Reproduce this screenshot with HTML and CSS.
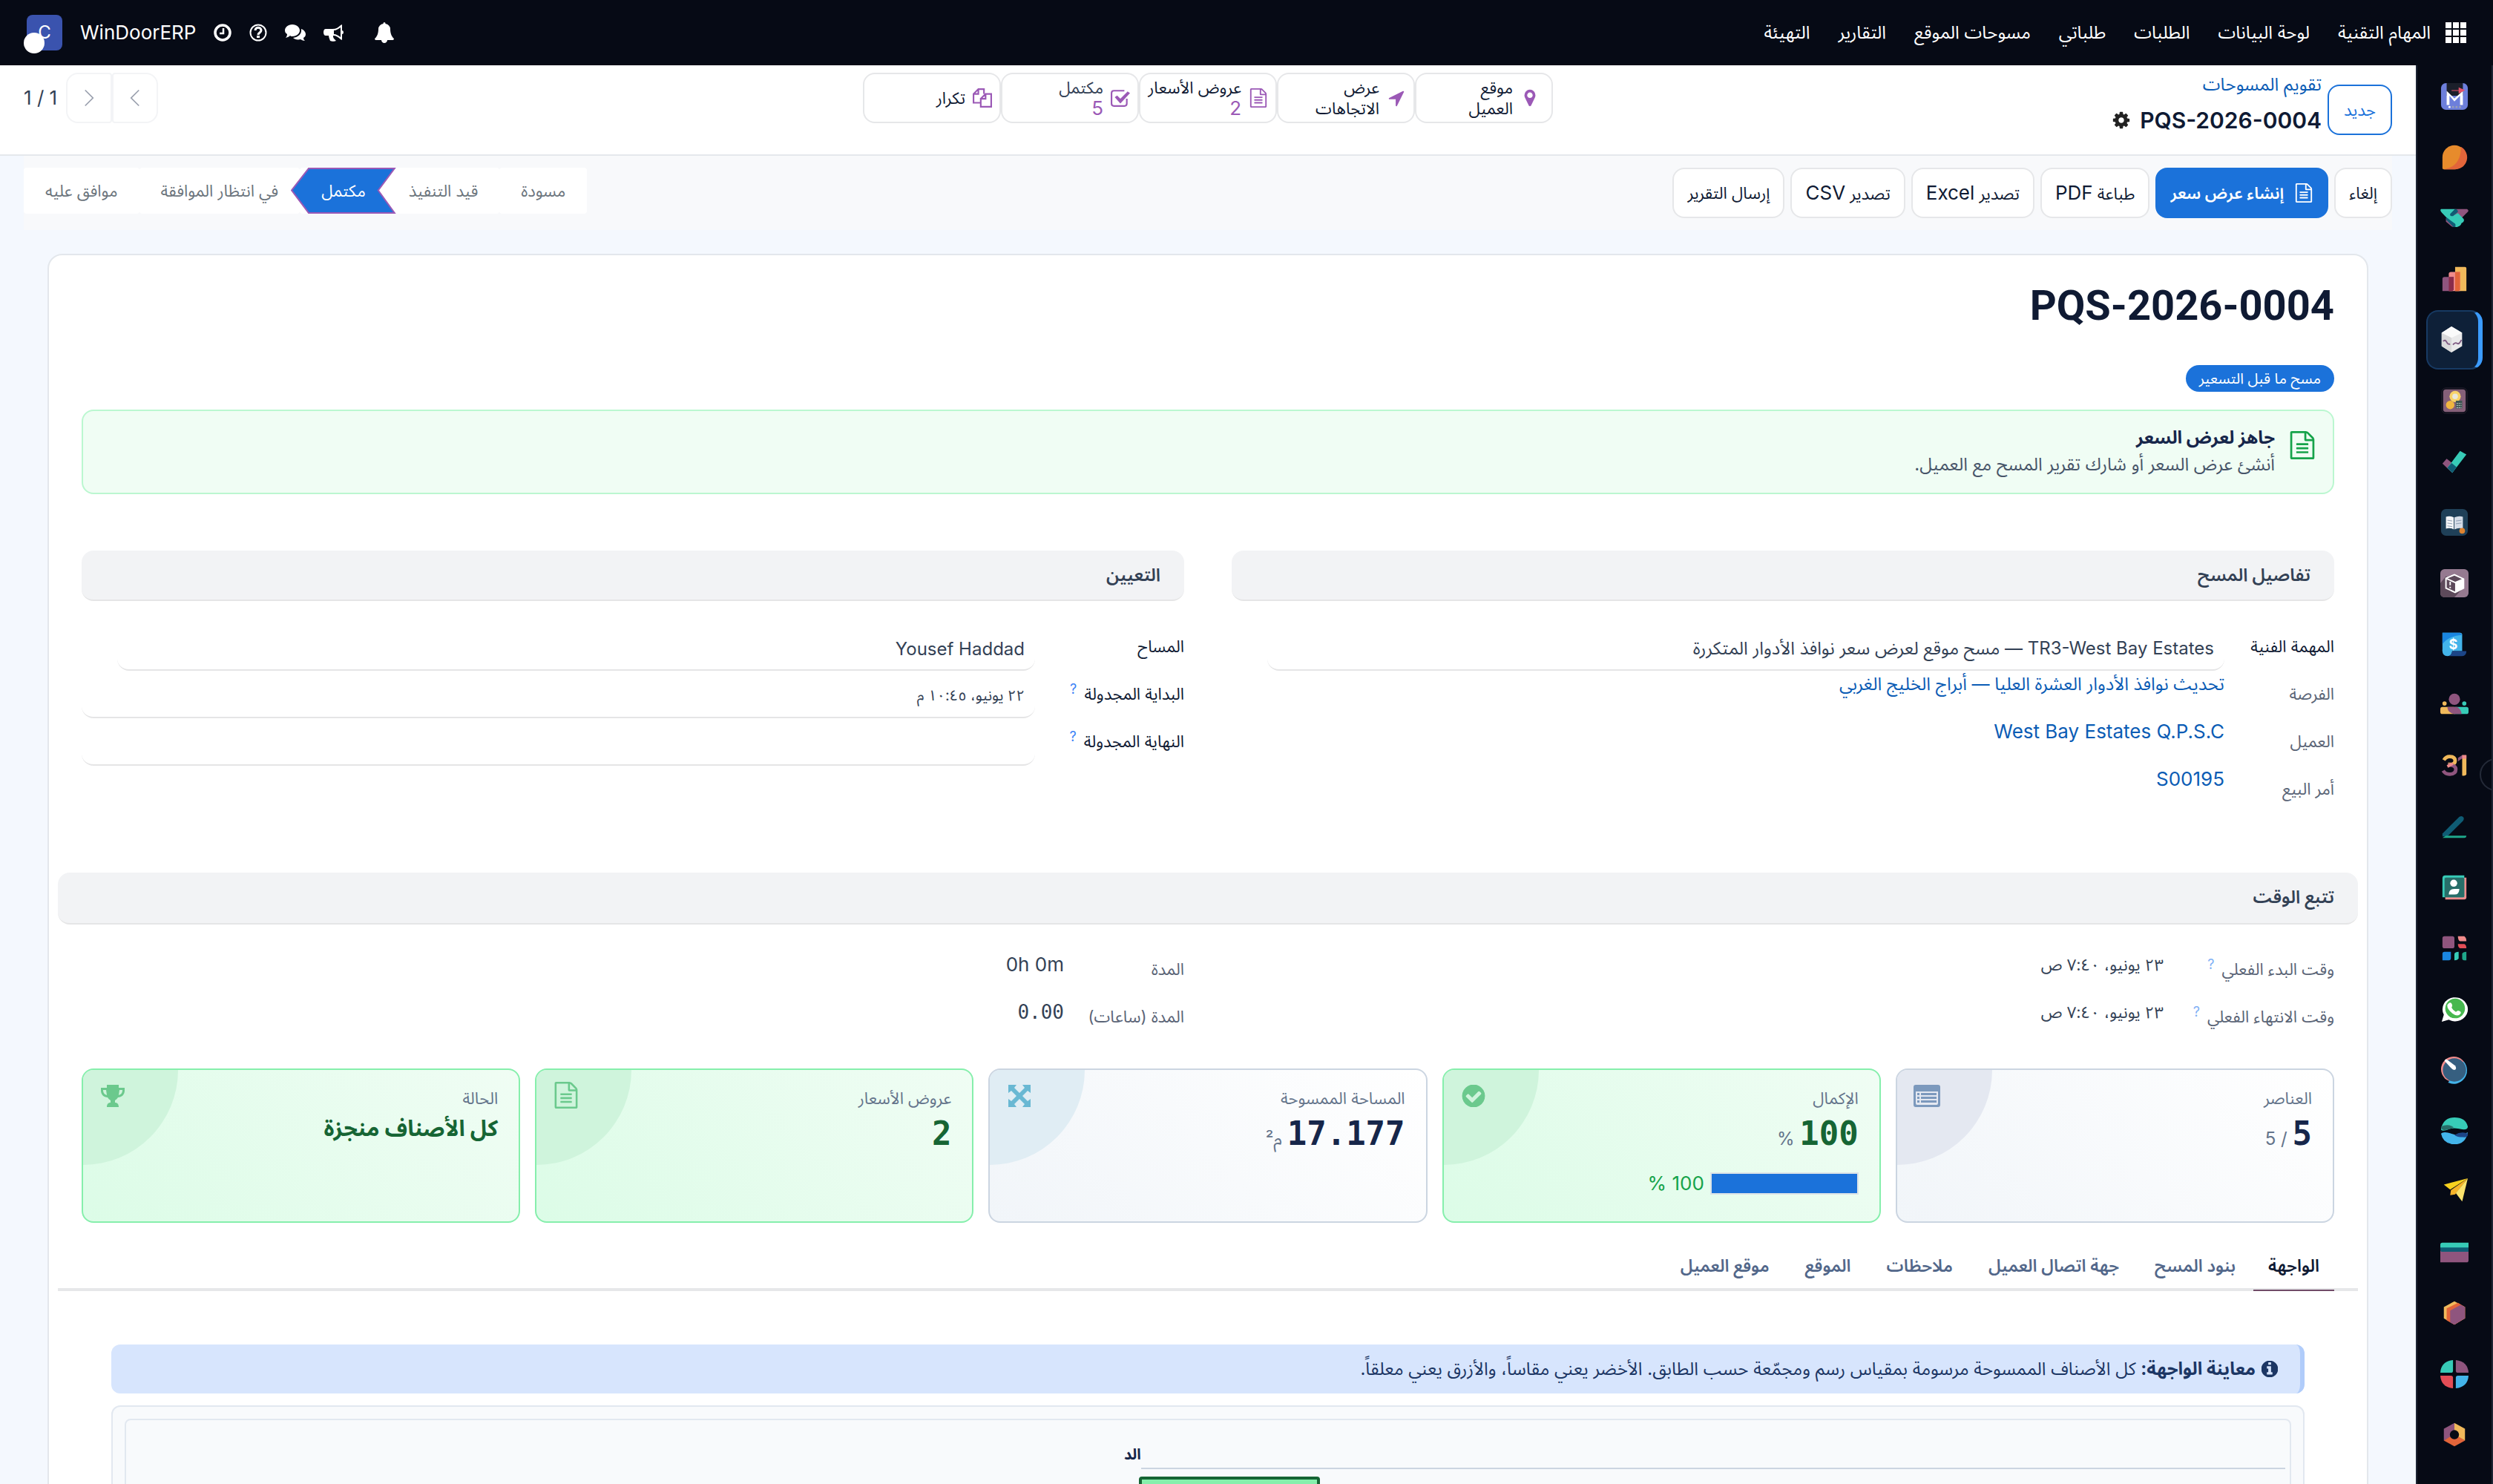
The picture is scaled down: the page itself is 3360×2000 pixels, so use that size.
FILE: index.html
```html
<!DOCTYPE html>
<html lang="ar" dir="rtl">
<head>
  <meta charset="UTF-8" />
  <meta name="viewport" content="width=device-width, initial-scale=1.0"/>
  <title>PQS-2026-0004 | WinDoorERP</title>
  <link rel="stylesheet" href="styles.css">
</head>
<body>

  <!-- shared icons -->
  <svg class="sprite" aria-hidden="true">
    <symbol id="i-file" viewBox="0 0 1792 1792"><path d="M1596 380q28 28 48 76t20 88v1152q0 40-28 68t-68 28h-1344q-40 0-68-28t-28-68v-1600q0-40 28-68t68-28h896q40 0 88 20t76 48zm-444-244v376h376q-10-29-22-41l-313-313q-12-12-41-22zm384 1528v-1024h-416q-40 0-68-28t-28-68v-416h-768v1536h1280zm-1024-864q0-14 9-23t23-9h704q14 0 23 9t9 23v64q0 14-9 23t-23 9h-704q-14 0-23-9t-9-23v-64zm736 224q14 0 23 9t9 23v64q0 14-9 23t-23 9h-704q-14 0-23-9t-9-23v-64q0-14 9-23t23-9h704zm0 256q14 0 23 9t9 23v64q0 14-9 23t-23 9h-704q-14 0-23-9t-9-23v-64q0-14 9-23t23-9h704z"/></symbol>
    <symbol id="i-bell" viewBox="0 0 1792 1792"><path d="M1728 1408q0 52-38 90t-90 38h-448q0 106-75 181t-181 75-181-75-75-181h-448q-52 0-90-38t-38-90q50-42 91-88t85-119.500 74.500-158.500 50-206 19.500-260q0-152 117-282.500t307-158.500q-8-19-8-39 0-40 28-68t68-28 68 28 28 68q0 20-8 39 190 28 307 158.500t117 282.500q0 139 19.500 260t50 206 74.500 158.500 85 119.500 91 88z"/></symbol>
    <symbol id="i-cog" viewBox="0 0 1792 1792"><path d="M1152 896q0-106-75-181t-181-75-181 75-75 181 75 181 181 75 181-75 75-181zm512-109v222q0 12-8 23t-20 13l-185 28q-19 54-39 91 35 50 107 138 10 12 10 25t-9 23q-27 37-99 108t-94 71q-12 0-26-9l-138-108q-44 23-91 38-16 136-29 186-7 28-36 28h-222q-14 0-24.500-8.500t-11.500-21.500l-28-184q-49-16-90-37l-141 107q-10 9-25 9-14 0-25-11-126-114-165-168-7-10-7-23 0-12 8-23 15-21 51-66.500t54-70.500q-27-50-41-99l-183-27q-13-2-21-12.500t-8-23.500v-222q0-12 8-23t19-13l186-28q14-46 39-92-40-57-107-138-10-12-10-24 0-10 9-23 26-36 98.500-107.500t94.500-71.500q13 0 26 10l138 107q44-23 91-38 16-136 29-186 7-28 36-28h222q14 0 24.500 8.500t11.500 21.500l28 184q49 16 90 37l142-107q9-9 24-9 13 0 25 10 129 119 165 170 7 8 7 22 0 12-8 23-15 21-51 66.500t-54 70.500q26 50 41 98l183 28q13 2 21 12.500t8 23.500z"/></symbol>
    <symbol id="i-pin" viewBox="0 0 1792 1792"><path d="M1152 640q0-106-75-181t-181-75-181 75-75 181 75 181 181 75 181-75 75-181zm256 0q0 109-33 179l-364 774q-16 33-47.500 52t-67.500 19-67.500-19-46.500-52l-365-774q-33-70-33-179 0-212 150-362t362-150 362 150 150 362z"/></symbol>
    <symbol id="i-arrow" viewBox="0 0 1792 1792"><path d="M1593 349l-640 1280q-17 35-57 35-5 0-15-2-22-5-35.500-22.500t-13.500-39.500v-576h-576q-22 0-39.500-13.500t-22.500-35.500 4-42 29-30l1280-640q13-7 29-7 27 0 45 19 15 14 18.500 34.500t-6.500 39.500z"/></symbol>
    <symbol id="i-check-circle" viewBox="0 0 1792 1792"><path d="M1412 734q0-28-18-46l-91-90q-19-19-45-19t-45 19l-408 407-226-226q-19-19-45-19t-45 19l-91 90q-18 18-18 46 0 27 18 45l362 362q19 19 45 19 27 0 46-19l543-543q18-18 18-45zm252 162q0 209-103 385.500t-279.500 279.500-385.500 103-385.500-103-279.500-279.500-103-385.500 103-385.500 279.500-279.500 385.500-103 385.500 103 279.500 279.500 103 385.500z"/></symbol>
    <symbol id="i-info" viewBox="0 0 1792 1792"><path d="M1152 1376v-160q0-14-9-23t-23-9h-96v-512q0-14-9-23t-23-9h-320q-14 0-23 9t-9 23v160q0 14 9 23t23 9h96v320h-96q-14 0-23 9t-9 23v160q0 14 9 23t23 9h448q14 0 23-9t9-23zm-128-896v-160q0-14-9-23t-23-9h-192q-14 0-23 9t-9 23v160q0 14 9 23t23 9h192q14 0 23-9t9-23zm640 416q0 209-103 385.500t-279.500 279.500-385.500 103-385.500-103-279.500-279.500-103-385.500 103-385.500 279.500-279.500 385.500-103 385.500 103 279.500 279.500 103 385.500z"/></symbol>
  </svg>

  <header class="navbar">
    <button class="apps-btn" aria-label="التطبيقات">
      <svg viewBox="0 0 28 28"><path d="M0 0h8v8H0zM10 0h8v8h-8zM20 0h8v8h-8zM0 10h8v8H0zM10 10h8v8h-8zM20 10h8v8h-8zM0 20h8v8H0zM10 20h8v8h-8zM20 20h8v8h-8z"/></svg>
    </button>
    <nav class="menu">
      <a class="brand" href="#">المهام التقنية</a>
      <a href="#">لوحة البيانات</a>
      <a href="#">الطلبات</a>
      <a href="#">طلباتي</a>
      <a href="#">مسوحات الموقع</a>
      <a href="#">التقارير</a>
      <a href="#">التهيئة</a>
    </nav>
    <div class="systray">
      <button aria-label="الإشعارات"><svg viewBox="0 0 24 24"><use href="#i-bell"/></svg></button>
      <button aria-label="الإعلانات"><svg class="wide" viewBox="0 0 28 24"><path d="M3 7h9c5 0 8-2 11-5l2-1v8q2 0 2 2.500T25 14v8l-2-1c-3-3-6-5-10-5 0 2 0 3 2 5l2 2c-2 1-6 1-8 0-1-3-2-5-2-7H3C1 16 0 14 0 11.500S1 7 3 7zm11 2v5c3 0 6 2 9 4V5c-3 2-6 4-9 4z" fill-rule="evenodd"/></svg></button>
      <button aria-label="الرسائل"><svg class="wide" viewBox="0 0 28 24"><path d="M10 1c6 0 10 4 10 8s-4 8-10 8c-1 0-2 0-3-1-2 2-4 2-6 3 1-1 2-3 2-5-2-1-3-3-3-5 0-4 4-8 10-8z"/><path d="M22 7c3 1 6 4 6 7 0 2-1 4-3 5 0 2 1 3 2 4-2 0-4-1-6-2-4 1-8 0-10-2 7-1 12-5 11-12z"/></svg></button>
      <button aria-label="المساعدة"><svg viewBox="0 0 24 24"><circle cx="12" cy="12" r="10.500" fill="none" stroke="currentColor" stroke-width="2"/><path d="M8 9c0-5 8-5 8 0 0 3-4 3-4 6" fill="none" stroke="currentColor" stroke-width="3"/><path d="M10 16h4v3h-4z"/></svg></button>
      <button aria-label="الأنشطة"><svg viewBox="0 0 24 24"><circle cx="12" cy="12" r="10" fill="none" stroke="currentColor" stroke-width="3.500"/><path d="M13 6v7H8" fill="none" stroke="currentColor" stroke-width="2.500"/></svg></button>
      <span class="company">WinDoorERP</span>
      <button class="avatar" aria-label="الحساب">C<span class="presence"></span></button>
    </div>
  </header>

  <div class="app">
    <aside class="sidebar">
      <a href="#" aria-label="M"><svg viewBox="0 0 40 40"><rect x="1" y="1" width="38" height="38" rx="7" fill="#6d7fdb"/><path d="M9 1h23v18H9z" fill="#1b1f2a"/><path d="M9 32V12l11 11 12-11v20h-4V19l-8 8-7-8v13z" fill="#fff"/><path d="M16 11h10V7l9 4-9 5v-4H16z" fill="#e4526a"/><circle cx="13" cy="35" r="1.500" fill="#fff"/><circle cx="18" cy="35" r="1.500" fill="#9aa0b5"/><circle cx="23" cy="35" r="1.500" fill="#9aa0b5"/><circle cx="28" cy="35" r="1.500" fill="#9aa0b5"/></svg></a>
      <a href="#" aria-label="المناقشات"><svg viewBox="0 0 40 40"><path d="M3 20a17 17 0 1 1 17 17H5q-2 0-2-2z" fill="#e78b2c"/><path d="M29 5a17 17 0 0 1-9 32H5C20 35 30 24 29 5z" fill="#e2653a"/></svg></a>
      <a href="#" aria-label="إدارة علاقات العملاء"><svg viewBox="0 0 40 40"><path d="M21 7h17q3 2 1 4L26 24 16 14z" fill="#8f557e"/><path d="M8 20l14 9q-4 6-8 1l-6-5z" fill="#8f557e"/><path d="M1 7h20l-6 7q2 3 6 1l4-2 8 8q2 4-3 6-1 4-5 5-4 2-6-2L2 12Q-1 9 1 7z" fill="#37cbb7"/><path d="M21 7q4 0 4 4l-7 6q-5 1-4-3zM9 19l12 9q2 4-2 5L8 22z" fill="#0f5c74"/></svg></a>
      <a href="#" aria-label="لوحات المعلومات"><svg viewBox="0 0 40 40"><path d="M21 3h14q2 0 2 2v32H21z" fill="#f0b95b"/><path d="M12 13q0-3 3-3h13v27H12z" fill="#f08b8b"/><path d="M21 10h7v25l-2 2h-5z" fill="#e2653a"/><path d="M3 20q0-3 3-3h13v18l-2 2H3z" fill="#8f557e"/><path d="M12 17h7v18l-2 2h-5z" fill="#8a2c4b"/></svg></a>
      <a href="#" class="active" aria-label="المهام التقنية"><svg viewBox="0 0 40 40"><path d="M18 1l15 9v19L18 38 4 29V10z" fill="#e9e9ea"/><path d="M4 10l14 7v21L4 29z" fill="#d9d9da"/><path d="M18 1l15 9-15 7-14-7z" fill="#fafafa"/><path d="M6 22q3-3 5 1t5 3M20 27q3-4 6-2t6-5" fill="none" stroke="#7f5a83" stroke-width="2"/></svg></a>
      <a href="#" aria-label="التسعير"><svg viewBox="0 0 40 40"><rect x="2" y="2" width="36" height="36" rx="6" fill="none" stroke="#2b2433"/><rect x="4" y="4" width="32" height="32" rx="4" fill="#856079"/><circle cx="21" cy="14" r="8" fill="#f7d368"/><circle cx="21" cy="14" r="4" fill="#e8e8dc"/><circle cx="14" cy="26" r="6" fill="#f0b63f"/><rect x="22" y="20" width="9" height="11" fill="#3f5552"/><path d="M23 24h7M23 27h7M23 30h7" stroke="#d5dde0" stroke-dasharray="2 1"/></svg></a>
      <a href="#" aria-label="المهام"><svg viewBox="0 0 40 40"><path d="M3 23l6-7 14 11-6 9z" fill="#8f557e"/><path d="M10 29L28 5l9 5-20 26z" fill="#37cbb7"/><path d="M10 29l6-7 7 6-6 8z" fill="#0f5c74"/></svg></a>
      <a href="#" aria-label="المعرفة"><svg viewBox="0 0 40 40"><rect x="1" y="1" width="38" height="38" rx="7" fill="#1f4058"/><path d="M8 12q6-2 11 1v17q-5-3-11-1z" fill="#f4f6f8"/><path d="M32 12q-6-2-12 1v17q6-3 12-1z" fill="#d5dde8"/><path d="M10 17l7 1M10 21l7 1M10 25l7 1M22 18l8-1M22 22l8-1" stroke="#8a9bb0"/><circle cx="31" cy="32" r="4" fill="#de8431"/></svg></a>
      <a href="#" aria-label="المخزون"><svg viewBox="0 0 40 40"><rect width="40" height="40" rx="6" fill="#957a90"/><path d="M0 20L8 10l26 15-14 15H6q-6 0-6-6z" fill="#5d4a5b"/><path d="M8 13l12-5 13 6v13l-12 6-13-6z" fill="#5d4a5b" stroke="#fff" stroke-width="2"/><path d="M21 19l12-5v13l-12 6z" fill="#fff"/><path d="M8 13l13 6 12-5" fill="none" stroke="#fff" stroke-width="2"/><path d="M14 18v5M14 25v2" stroke="#fff" stroke-width="2"/></svg></a>
      <a href="#" aria-label="المصروفات"><svg viewBox="0 0 40 40"><path d="M3 4h25q3 0 3 3v23H3z" fill="#43b4ea"/><path d="M3 4h25l3 3Q12 8 3 20z" fill="#1a86e0"/><path d="M3 28h14q0 9-7 9T3 30z" fill="#43b4ea"/><path d="M17 30h20q0 7-6 7H12q4-1 5-7z" fill="#1c4587"/><text x="12" y="27" font-size="19" font-weight="700" fill="#fff" direction="ltr">$</text></svg></a>
      <a href="#" aria-label="الموظفون"><svg viewBox="0 0 40 40"><circle cx="20" cy="12" r="8" fill="#8f557e"/><circle cx="6" cy="18" r="3" fill="#f0b95b"/><circle cx="34" cy="18" r="3" fill="#37cbb7"/><rect y="23" width="22" height="10" rx="3" fill="#f0b95b"/><rect x="18" y="23" width="22" height="10" rx="3" fill="#37cbb7"/><path d="M10 23h14q6 4 6 10H20Q10 31 10 23z" fill="#8f557e"/></svg></a>
      <a href="#" aria-label="التقويم"><svg viewBox="0 0 40 40"><path d="M5 12q3-5 8-5 8 0 8 6 0 4-4 5H11" fill="none" stroke="#f0b95b" stroke-width="5"/><path d="M11 19h4q7 1 7 6 0 7-9 7-6 0-9-5" fill="none" stroke="#8f557e" stroke-width="5"/><path d="M10 21l8-4" stroke="#f08b8b" stroke-width="4"/><path d="M31 5h6v27q-1 3-6 2z" fill="#f0b95b"/><path d="M25 14V9l6-4h6z" fill="#8f557e"/><path d="M31 5h6v5h-6z" fill="#f08b8b"/></svg></a>
      <a href="#" aria-label="التوقيع"><svg viewBox="0 0 40 40"><path d="M3 34v-4L27 6q4-2 6 1 1 3-1 5L10 34z" fill="#0f5c74"/><path d="M8 33h29q0 3-3 3H3z" fill="#1fa78a"/></svg></a>
      <a href="#" aria-label="جهات الاتصال"><svg viewBox="0 0 40 40"><path d="M7 6h30v28q0 3-3 3H7z" fill="#f08b8b"/><path d="M3 7q0-4 4-4h27v31H3z" fill="#37cbb7"/><rect x="6" y="6" width="28" height="28" rx="2" fill="#276e69"/><circle cx="19" cy="14" r="5" fill="#fff"/><path d="M12 30q0-8 8-8h7q0 8-7 8z" fill="#fff"/></svg></a>
      <a href="#" aria-label="التطبيقات"><svg viewBox="0 0 40 40"><rect x="3" y="3" width="17" height="17" rx="3" fill="#8f557e"/><path d="M25 3h9q3 2 3 7H28q-3-1-3-7z" fill="#f08b8b"/><path d="M25 14h9q3 1 3 6H28q-3-1-3-6z" fill="#e34d56"/><path d="M3 28q0-3 3-3h9v9q0 3-3 3H3z" fill="#1a86e0"/><path d="M20 28q1-3 6-3v9q-1 3-6 3z" fill="#37cbb7"/><path d="M31 28q1-3 6-3v12h-3q-3 0-3-3z" fill="#1fa78a"/></svg></a>
      <a href="#" aria-label="واتساب"><svg viewBox="0 0 40 40"><path d="M2 38l3-10a18 17 0 1 1 7 7z" fill="#fff"/><circle cx="21" cy="19" r="14" fill="#47b84f"/><path d="M13 11q3-1 4 4l-1 3q2 4 6 6l3-2q5 1 4 4-4 6-12 0-8-7-7-12 1-2 3-3z" fill="#fff"/></svg></a>
      <a href="#" aria-label="المؤشرات"><svg viewBox="0 0 40 40"><circle cx="19" cy="19" r="18" fill="#f08b8b"/><path d="M33 8a19 19 0 0 1-22 30z" fill="#43b4ea"/><circle cx="20" cy="20" r="16.500" fill="#365f80"/><path d="M6 7q1-3 3-2l12 9q3 5-1 6-2 0-4-2z" fill="#fff"/></svg></a>
      <a href="#" aria-label="الموقع الإلكتروني"><svg viewBox="0 0 40 40"><path d="M1 18Q4 1 20 1t19 13q0 5-8 4-14-4-22 1-8 2-8-1z" fill="#37cbb7"/><path d="M1 14q10-5 18 1-5 3-13 4-5 0-5-5z" fill="#276e69"/><path d="M1 24q4-4 18 1 8 3 20-3Q36 39 20 39T1 24z" fill="#43b4ea"/><path d="M39 24q1 6-7 5-8 0-12-3 10-6 19-2z" fill="#1c4587"/></svg></a>
      <a href="#" aria-label="التسويق"><svg viewBox="0 0 40 40"><path d="M39 1L5 10l9 7z" fill="#f7d11e"/><path d="M39 1L15 18l-1 7 7-1z" fill="#f6b42a"/><path d="M39 1L22 22l9 12z" fill="#fbe36c"/></svg></a>
      <a href="#" aria-label="المدفوعات"><svg viewBox="0 0 40 40"><path d="M0 9q0-3 3-3h37v8H0z" fill="#37cbb7"/><path d="M0 17h40v14q0 3-3 3H0z" fill="#8f557e"/><path d="M0 13h40v6H3q-3 0-3-3z" fill="#0f5c74"/></svg></a>
      <a href="#" aria-label="المشتريات"><svg viewBox="0 0 40 40"><path d="M20 3l15 8v16l-15 9-15-9V11z" fill="#f0b95b"/><path d="M9 13l16-8 10 6v16l-15 9-11-6z" fill="#e2653a"/><path d="M14 16l15-8 6 3v16l-15 9-6-3z" fill="#8f557e"/></svg></a>
      <a href="#" aria-label="المحاسبة"><svg viewBox="0 0 40 40"><path d="M0 18Q1 2 18 0v15q0 3-3 3z" fill="#37cbb7"/><path d="M22 0q17 2 18 18H25q-3 0-3-3z" fill="#8f557e"/><path d="M0 22h15q3 0 3 3v15Q1 38 0 22z" fill="#e34d56"/><path d="M22 25q0-3 3-3h15q-1 16-18 18z" fill="#43b4ea"/></svg></a>
      <a href="#" aria-label="الإعدادات"><svg viewBox="0 0 40 40"><path d="M20 3v17L5 28V11z" fill="#8f557e"/><path d="M20 3l15 8v17l-15-8z" fill="#f0b95b"/><path d="M5 28l8-5h14l8 5-15 8z" fill="#e2653a"/><circle cx="20" cy="19.500" r="6.500" fill="#060a15"/></svg></a>
      <button class="sidebar-toggle" aria-label="طي"></button>
    </aside>

    <main class="main">
      <div class="control-panel">
        <div class="cp-side">
          <button class="new-btn">جديد</button>
          <div class="breadcrumb">
            <a href="#">تقويم المسوحات</a>
            <div class="record-name"><bdi>PQS-2026-0004</bdi> <button aria-label="إجراءات"><svg viewBox="0 0 24 24"><use href="#i-cog"/></svg></button></div>
          </div>
        </div>
        <div class="stat-buttons">
          <button><svg viewBox="0 0 24 24"><use href="#i-pin"/></svg><span>موقع<br>العميل</span></button>
          <button><svg viewBox="0 0 24 24"><use href="#i-arrow"/></svg><span>عرض<br>الاتجاهات</span></button>
          <button><svg viewBox="0 0 24 24"><use href="#i-file"/></svg><span>عروض الأسعار<b>2</b></span></button>
          <button><svg viewBox="0 0 24 24"><path d="M20 13v6q0 3-3 3H4q-3 0-3-3V6q0-3 3-3h13" fill="none" stroke="currentColor" stroke-width="2"/><path d="M5 11l3-2 4 4 9-9 3 2-12 13z"/></svg><span class="soft">مكتمل<b>5</b></span></button>
          <button><svg viewBox="0 0 24 24"><path d="M10 18H1V7l6-6h7v6M1 7h6V1M10 13l6-6h7v16H10V13h6V7" fill="none" stroke="currentColor" stroke-width="2"/></svg><span>تكرار</span></button>
        </div>
        <div class="pager">
          <button aria-label="السابق"><svg viewBox="0 0 16 28"><path d="M14 2L2 14l12 12"/></svg></button>
          <button aria-label="التالي"><svg viewBox="0 0 16 28"><path d="M2 2l12 12L2 26"/></svg></button>
          <span dir="ltr">1 / 1</span>
        </div>
      </div>

      <div class="form-view">
        <div class="status-row">
          <div class="actions">
            <button>إلغاء</button>
            <button class="primary"><svg viewBox="0 0 24 24"><use href="#i-file"/></svg>إنشاء عرض سعر</button>
            <button><span>طباعة <bdi>PDF</bdi></span></button>
            <button><span>تصدير <bdi>Excel</bdi></span></button>
            <button><span>تصدير <bdi>CSV</bdi></span></button>
            <button>إرسال التقرير</button>
          </div>
          <div class="statusbar">
            <button>مسودة</button>
            <button>قيد التنفيذ</button>
            <button class="current"><svg viewBox="0 0 142 61" preserveAspectRatio="none"><path d="M24 1h116l-22 29 22 30H24L1 30z"/></svg><span>مكتمل</span></button>
            <button>في انتظار الموافقة</button>
            <button>موافق عليه</button>
          </div>
        </div>

        <div class="sheet">
          <h1><bdi>PQS-2026-0004</bdi></h1>
          <span class="badge">مسح ما قبل التسعير</span>

          <div class="ready">
            <svg viewBox="0 0 24 24"><use href="#i-file"/></svg>
            <div>
              <strong>جاهز لعرض السعر</strong>
              <p>أنشئ عرض السعر أو شارك تقرير المسح مع العميل.</p>
            </div>
          </div>

          <div class="groups">
            <section class="details">
              <h2>تفاصيل المسح</h2>
              <div class="field">
                <label for="task">المهمة الفنية</label>
                <input class="short" id="task" type="text" value="TR3-West Bay Estates — مسح موقع لعرض سعر نوافذ الأدوار المتكررة" />
              </div>
              <div class="field readonly"><span>الفرصة</span><a href="#">تحديث نوافذ الأدوار العشرة العليا — أبراج الخليج الغربي</a></div>
              <div class="field readonly"><span>العميل</span><a href="#"><bdi>West Bay Estates Q.P.S.C</bdi></a></div>
              <div class="field readonly"><span>أمر البيع</span><a href="#"><bdi>S00195</bdi></a></div>
            </section>
            <section class="assignment">
              <h2>التعيين</h2>
              <div class="field">
                <label for="surveyor">المساح</label>
                <input class="short" id="surveyor" type="text" value="Yousef Haddad" />
              </div>
              <div class="field">
                <label for="start">البداية المجدولة <sup>?</sup></label>
                <input class="date" id="start" type="text" value="٢٢ يونيو، ١٠:٤٥ م" />
              </div>
              <div class="field">
                <label for="end">النهاية المجدولة <sup>?</sup></label>
                <input class="date" id="end" type="text" />
              </div>
            </section>
          </div>

          <section class="tracking">
            <h2>تتبع الوقت</h2>
            <div class="groups">
              <div class="actual">
                <div class="field readonly"><span>وقت البدء الفعلي <sup>?</sup></span><p>٢٣ يونيو، ٧:٤٠ ص</p></div>
                <div class="field readonly"><span>وقت الانتهاء الفعلي <sup>?</sup></span><p>٢٣ يونيو، ٧:٤٠ ص</p></div>
              </div>
              <div class="duration">
                <div class="field readonly"><span>المدة</span><p><bdi>0h 0m</bdi></p></div>
                <div class="field readonly"><span>المدة (ساعات)</span><p><bdi class="mono">0.00</bdi></p></div>
              </div>
            </div>
          </section>

          <div class="cards">
            <div class="card slate">
              <svg viewBox="0 0 36 30"><path d="M3 0h30q3 0 3 3v24q0 3-3 3H3q-3 0-3-3V3q0-3 3-3zm0 9v16q0 2 2 2h26q2 0 2-2V9zM5 11h3v3H5zM10 11h21v3H10zM5 16h3v3H5zM10 16h21v3H10zM5 21h3v3H5zM10 21h21v3H10z" fill-rule="evenodd"/></svg>
              <h3>العناصر</h3>
              <p class="value"><b>5</b> / 5</p>
            </div>
            <div class="card green">
              <svg viewBox="2 2 20 20"><use href="#i-check-circle" width="24" height="24"/></svg>
              <h3>الإكمال</h3>
              <p class="value"><b>100</b> %</p>
              <div class="progress"><div class="track"><div class="fill" style="width: 100%"></div></div><span>100 %</span></div>
            </div>
            <div class="card sky">
              <svg viewBox="0 0 30 30"><path d="M0 0h11L8 4l7 7 7-7-3-4h11v11l-4-3-7 7 7 7 4-3v11H19l3-4-7-7-7 7 3 4H0V19l4 3 7-7-7-7-4 3z"/></svg>
              <h3>المساحة الممسوحة</h3>
              <p class="value"><b>17.177</b> م²</p>
            </div>
            <div class="card green">
              <svg class="tall" viewBox="0 0 24 24"><use href="#i-file"/></svg>
              <h3>عروض الأسعار</h3>
              <p class="value"><b>2</b></p>
            </div>
            <div class="card green">
              <svg viewBox="0 0 32 30"><path d="M8 0h16v4h8v4c0 5-4 9-9 9-1 2-3 3-4 4v3c3 0 5 2 5 6H8c0-4 2-6 5-6v-3c-1-1-3-2-4-4-5 0-9-4-9-9V4h8zM3 7c0 4 2 6 5 7L7 7zm26 0h-4l-1 7c3-1 5-3 5-7z" fill-rule="evenodd"/></svg>
              <h3>الحالة</h3>
              <p class="value words"><b>كل الأصناف منجزة</b></p>
            </div>
          </div>

          <nav class="tabs" role="tablist">
            <button role="tab" aria-selected="true" class="active">الواجهة</button>
            <button role="tab">بنود المسح</button>
            <button role="tab">جهة اتصال العميل</button>
            <button role="tab">ملاحظات</button>
            <button role="tab">الموقع</button>
            <button role="tab">موقع العميل</button>
          </nav>

          <div class="tab-pane">
            <div class="hint"><svg viewBox="2 2 20 20"><use href="#i-info" width="24" height="24"/></svg><p><strong>معاينة الواجهة:</strong> كل الأصناف الممسوحة مرسومة بمقياس رسم ومجمّعة حسب الطابق. الأخضر يعني مقاساً، والأزرق يعني معلقاً.</p></div>
            <div class="elevation">
              <div class="canvas">
                <div class="floor"><div class="floor-line"></div><span>الد</span></div>
                <div class="floor-items"><div class="unit"></div></div>
              </div>
            </div>
          </div>
        </div>
      </div>
    </main>
  </div>

</body>
</html>
```

FILE: styles.css
```css
* {
  box-sizing: border-box;
  margin: 0;
  padding: 0;
}

body {
  height: 100vh;
  overflow: hidden;
  display: flex;
  flex-direction: column;
  background: #f4f8fe;
  color: #334155;
  font-family: Inter, "Noto Sans Arabic", sans-serif;
  font-size: 24px;
  line-height: 36px;
}

button, input {
  font: inherit;
  color: inherit;
  background: none;
  border: none;
}

button {
  cursor: pointer;
}

a {
  color: #0b5cb5;
  text-decoration: none;
}

svg {
  display: block;
  fill: currentColor;
  flex: none;
}

.sprite {
  position: absolute;
  width: 0;
  height: 0;
}

/* top bar */
.navbar {
  flex: none;
  height: 88px;
  padding: 0 36px 0 32px;
  display: flex;
  align-items: center;
  background: #060a15;
  color: #fff;
}

.apps-btn {
  margin-left: 20px;
}

.apps-btn svg {
  width: 28px;
  height: 28px;
}

.menu {
  display: flex;
  gap: 38px;
}

.menu a {
  color: #fff;
}

.systray {
  margin-right: auto;
  display: flex;
  align-items: center;
  gap: 24px;
}

.systray svg {
  width: 24px;
  height: 26px;
}

.systray svg.wide {
  width: 28px;
}

.systray button:first-child {
  margin-left: 16px;
}

.systray button:first-child svg {
  width: 28px;
  height: 28px;
}

.company {
  font-size: 26px;
}

.systray .avatar {
  position: relative;
  width: 48px;
  height: 48px;
  margin-left: 4px;
  border-radius: 8px;
  background: #3a53ae;
}

.presence {
  position: absolute;
  left: -4px;
  bottom: -4px;
  width: 28px;
  height: 28px;
  border-radius: 50%;
  background: #fff;
}

.app {
  flex: 1;
  min-height: 0;
  display: flex;
}

/* apps sidebar */
.sidebar {
  position: relative;
  flex: none;
  width: 104px;
  padding-top: 2px;
  display: flex;
  flex-direction: column;
  align-items: center;
  gap: 2px;
  overflow: hidden;
  background: #060a15;
  border-left: 2px solid #1d2433;
  border-right: 2px solid #1d2433;
}

.sidebar a {
  flex: none;
  width: 76px;
  height: 80px;
  display: flex;
  align-items: center;
  justify-content: center;
  border: 2px solid transparent;
  border-radius: 16px;
}

.sidebar a.active {
  background: #0e2038;
  border-color: #173a63;
  border-right: 6px solid #3b9bff;
}

.sidebar svg {
  width: 38px;
  height: 38px;
}

.sidebar-toggle {
  position: absolute;
  right: -28px;
  top: 934px;
  width: 44px;
  height: 44px;
  border: 2px solid #242a38;
  border-radius: 50%;
}

.main {
  flex: 1;
  min-width: 0;
  display: flex;
  flex-direction: column;
}

/* control panel */
.control-panel {
  flex: none;
  height: 122px;
  padding: 10px 32px;
  display: grid;
  grid-template-columns: 1fr auto 1fr;
  background: #fff;
  border-bottom: 2px solid #e5e8ec;
}

.cp-side {
  display: flex;
  gap: 8px;
}

.new-btn {
  height: 68px;
  margin-top: 16px;
  padding: 0 20px;
  border: 2px solid #1b72da;
  border-radius: 16px;
  color: #1b72da;
  font-size: 22px;
}

.breadcrumb {
  line-height: 32px;
}

.record-name {
  display: flex;
  align-items: center;
  gap: 12px;
  margin-top: 16px;
  color: #0f1a33;
  font-size: 30px;
  font-weight: 600;
}

.record-name svg {
  width: 26px;
  height: 26px;
  color: #222;
}

.stat-buttons {
  display: flex;
}

.stat-buttons button {
  width: 186px;
  height: 68px;
  padding: 0 10px;
  display: flex;
  align-items: center;
  gap: 10px;
  border: 2px solid #e6e7e9;
  border-radius: 16px;
  color: #0f1a33;
  font-size: 22px;
  line-height: 28px;
  text-align: right;
  white-space: nowrap;
}

.stat-buttons button:first-child {
  padding-right: 16px;
}

.stat-buttons svg {
  width: 26px;
  height: 26px;
  color: #9b59b6;
}

.stat-buttons b {
  display: block;
  color: #9b59b6;
  font-size: 26px;
  font-weight: 400;
}

.stat-buttons .soft {
  color: #334155;
}

.pager {
  display: flex;
  justify-content: flex-end;
  align-items: flex-start;
  font-size: 26px;
  line-height: 68px;
}

.pager button {
  width: 62px;
  height: 68px;
  border: 2px solid #f3f4f6;
  border-radius: 4px 16px 16px 4px;
}

.pager button + button {
  border-radius: 16px 4px 4px 16px;
}

.pager svg {
  width: 14px;
  height: 26px;
  margin: auto;
  fill: none;
  stroke: #9aa0ae;
  stroke-width: 2;
}

.pager span {
  margin-right: 12px;
}

/* form view */
.form-view {
  flex: 1;
  min-height: 0;
  padding: 0 32px;
  overflow: hidden;
}

.status-row {
  height: 100px;
  padding: 16px 0;
  display: flex;
  justify-content: space-between;
  background: #f8f9fb;
  font-size: 22px;
}

.actions {
  display: flex;
  gap: 8px;
}

.actions button {
  height: 68px;
  padding: 0 18px;
  display: flex;
  align-items: center;
  gap: 14px;
  border: 2px solid #e6e7e9;
  border-radius: 16px;
  background: #fff;
  color: #0f1a33;
}

.actions .primary {
  background: #1b72da;
  border-color: #1b72da;
  color: #fff;
  font-weight: 600;
}

.actions bdi {
  font-size: 26px;
}

.actions svg {
  width: 26px;
  height: 26px;
}

.statusbar {
  height: 62px;
  display: flex;
}

.statusbar button {
  padding: 0 29px;
  background: #fff;
  border-radius: 4px;
  color: #6c757d;
}

.statusbar .current {
  position: relative;
  color: #fff;
}

/* the arrow laps over both neighbours */
.statusbar .current svg {
  position: absolute;
  top: 0;
  left: -12px;
  width: calc(100% + 24px);
  height: 100%;
  fill: #1b72da;
  stroke: #9b59b6;
  stroke-width: 2;
}

.statusbar .current span {
  position: relative;
}

/* sheet */
.sheet {
  margin: 32px 32px 0;
  padding: 32px 12px 0;
  min-height: 1800px;
  background: #fff;
  border: 2px solid #e3e7ec;
  border-radius: 20px;
}

.sheet h1 {
  margin: 0 32px;
  color: #0f1a33;
  font-family: Roboto, sans-serif;
  font-size: 56px;
  line-height: 72px;
  font-weight: 700;
}

.badge {
  display: block;
  width: fit-content;
  margin: 44px 32px 24px;
  padding: 0 18px;
  border-radius: 18px;
  background: #1b72da;
  color: #fff;
  font-size: 20px;
}

.ready {
  margin: 0 32px;
  height: 114px;
  padding: 18px 22px;
  display: flex;
  gap: 18px;
  border: 2px solid #bbf7d0;
  border-radius: 16px;
  background: #f0fdf4;
  color: #475569;
}

.ready strong {
  display: block;
  color: #16264a;
}

.ready svg {
  width: 38px;
  height: 40px;
  margin-top: 8px;
  color: #16a34a;
}

.groups {
  display: grid;
  grid-template-columns: 1fr 1fr;
  gap: 64px;
  margin: 0 32px;
}

.ready + .groups {
  margin-top: 76px;
}

.sheet h2 {
  height: 68px;
  padding: 0 32px;
  background: #f2f3f5;
  border-bottom: 2px solid #e5e5e6;
  border-radius: 16px;
  color: #334155;
  font-size: 24px;
  line-height: 66px;
  font-weight: 600;
}

.details h2, .assignment h2 {
  margin-bottom: 30px;
}

.field {
  height: 64px;
  display: grid;
  grid-template-columns: 148px 1fr;
}

.assignment .field {
  grid-template-columns: 201px 1fr;
}

.actual .field {
  grid-template-columns: 230px 1fr;
}

.duration .field {
  grid-template-columns: 162px 1fr;
}

.field label, .field > span {
  color: #0f1a33;
  font-size: 22px;
  line-height: 62px;
  white-space: nowrap;
}

.field > span {
  color: #5b6577;
}

.field sup {
  margin-right: 4px;
  color: #3b82f6;
  font-size: 18px;
  line-height: 0;
}

.field > span sup {
  color: #7fb0f5;
}

.field input {
  min-width: 0;
  height: 64px;
  padding: 6px 14px 0;
  border-bottom: 2px solid #e5e5e6;
  border-radius: 16px;
  outline: none;
}

.field input.short {
  margin-left: 48px;
}

.field input.date {
  font-size: 20px;
}

.field bdi {
  font-size: 26px;
}

.tracking {
  margin-top: 80px;
}

.tracking h2 {
  height: 70px;
  margin-bottom: 29px;
}

.field p {
  font-size: 22px;
  line-height: 50px;
}

.mono, .value b {
  font-family: "DejaVu Sans Mono", monospace;
}

/* summary cards */
.cards {
  display: grid;
  grid-template-columns: repeat(5, 1fr);
  gap: 20px;
  margin: 37px 32px 0;
}

.card {
  position: relative;
  height: 208px;
  padding: 20px 28px;
  overflow: hidden;
  border: 2px solid #cbd5e1;
  border-radius: 16px;
  background: linear-gradient(45deg, #f1f5f9, #fff);
  color: #7c99bd;
}

.card::before {
  content: "";
  position: absolute;
  left: -128px;
  top: -128px;
  width: 256px;
  height: 256px;
  border-radius: 50%;
  background: #e4e8f1;
}

.card svg {
  position: absolute;
  left: 22px;
  top: 20px;
  width: 36px;
  height: 30px;
}

.card svg.tall {
  height: 36px;
  top: 16px;
}

.card h3 {
  color: #64748b;
  font-size: 22px;
  line-height: 36px;
  font-weight: 400;
}

.card.green {
  border-color: #86efac;
  background: linear-gradient(45deg, #dcfce7, #f0fdf4);
  color: #6bc98d;
}

.card.green::before {
  background: #cff4dc;
}

.card.sky {
  color: #69b8d3;
}

.card.sky::before {
  background: #e0edf4;
}

.value {
  color: #64748b;
  font-size: 24px;
  line-height: 60px;
}

.value b {
  color: #16264a;
  font-size: 44px;
  line-height: 60px;
}

.green .value b {
  color: #166534;
}

.value.words, .value.words b {
  font-family: inherit;
  font-size: 30px;
  line-height: 44px;
}

.progress {
  margin-top: 12px;
  display: flex;
  align-items: center;
  gap: 8px;
  color: #16a34a;
  font-size: 26px;
}

.track {
  width: 200px;
  height: 30px;
  padding: 2px;
  background: #dde3e6;
}

.fill {
  height: 100%;
  background: #1b72da;
}

/* notebook */
.tabs {
  margin-top: 26px;
  padding: 0 32px;
  display: flex;
  border-bottom: 2px solid #e6e7e9;
  box-shadow: inset 0 -2px #e6e7e9;
}

.tabs button {
  height: 66px;
  margin-bottom: -2px;
  padding: 0 24px 2px;
  color: #52678a;
  font-size: 23px;
  font-weight: 600;
}

.tabs .active {
  padding: 0 20px;
  color: #0f1a33;
  border-bottom: 2px solid #714b67;
}

.tab-pane {
  margin: 72px 72px 0;
}

.hint {
  height: 66px;
  padding: 0 30px;
  display: flex;
  align-items: center;
  gap: 8px;
  border-right: 6px solid #b0ccfa;
  border-radius: 12px;
  background: #d7e5fd;
  color: #1c3664;
}

.hint svg {
  width: 22px;
  height: 22px;
}

.elevation {
  margin-top: 16px;
  padding: 16px;
  border: 2px solid #e2e8f0;
  border-radius: 12px;
  background: #f8fafc;
}

.canvas {
  height: 400px;
  padding-top: 28px;
  border: 2px solid #e2e8f0;
  border-radius: 8px;
}

.floor {
  display: flex;
  padding-right: 6px;
}

.floor-line {
  width: 53%;
  border-bottom: 2px solid #cbd5e1;
}

.floor span {
  height: 38px;
  color: #16264a;
  font-size: 20px;
  font-weight: 700;
}

.floor-items {
  width: 53%;
  margin: 10px 6px 0 0;
  display: flex;
  justify-content: flex-end;
}

.unit {
  width: 244px;
  height: 200px;
  border: 4px solid #166534;
  border-radius: 4px;
  background: #86efac;
}
```
